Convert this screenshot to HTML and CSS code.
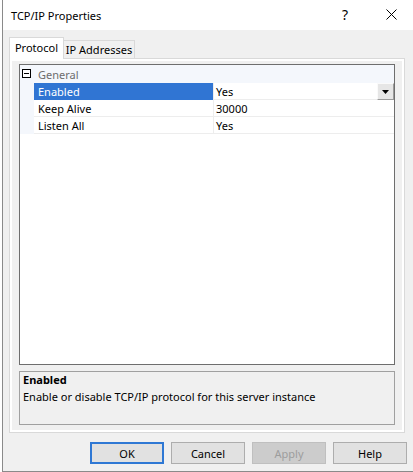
FILE: index.html
```html
<!DOCTYPE html>
<html>
<head>
<meta charset="utf-8">
<link rel="stylesheet" href="styles.css">
</head>
<body>
<div class="window">
  <div class="titlebar">
    <div class="title">TCP/IP Properties</div>
    <div class="cap cap-help">?</div>
    <div class="cap cap-close">
      <svg width="11" height="11" viewBox="0 0 11 11"><path d="M0.5 0.5 L10.5 10.5 M10.5 0.5 L0.5 10.5" stroke="#000" stroke-width="1" fill="none"/></svg>
    </div>
  </div>
  <div class="body">
    <div class="tabs">
      <div class="tabstrip">
        <div class="tab tab-active">Protocol</div>
        <div class="tab">IP Addresses</div>
      </div>
      <div class="panel">
        <div class="grid">
          <div class="cat">
            <span class="minus"><span class="minus-line"></span></span>
            <span class="cat-label">General</span>
          </div>
          <div class="row">
            <div class="gut"></div>
            <div class="name name-sel">Enabled</div>
            <div class="val">
              <span>Yes</span>
              <span class="dd"><svg width="7" height="4" viewBox="0 0 7 4"><polygon points="0,0 7,0 3.5,4" fill="#000"/></svg></span>
            </div>
          </div>
          <div class="row">
            <div class="gut"></div>
            <div class="name">Keep Alive</div>
            <div class="val"><span>30000</span></div>
          </div>
          <div class="row">
            <div class="gut"></div>
            <div class="name">Listen All</div>
            <div class="val"><span>Yes</span></div>
          </div>
        </div>
        <div class="desc">
          <div class="desc-title">Enabled</div>
          <div class="desc-text">Enable or disable TCP/IP protocol for this server instance</div>
        </div>
      </div>
    </div>
    <div class="buttons">
      <div class="btn btn-ok">OK</div>
      <div class="btn">Cancel</div>
      <div class="btn btn-disabled">Apply</div>
      <div class="btn">Help</div>
    </div>
  </div>
</div>
</body>
</html>
```

FILE: styles.css
```css
* { box-sizing: border-box; }
html, body { margin: 0; padding: 0; }
body {
  width: 413px;
  height: 472px;
  overflow: hidden;
  background: #ffffff;
  font-family: "Noto Sans", "DejaVu Sans", sans-serif;
  font-size: 11px;
  color: #000;
}
.window {
  margin-left: 2px;
  width: 412px;
  height: 472px;
  border-left: 1px solid #8a8a8a;
  border-bottom: 1px solid #8a8a8a;
  display: flex;
  flex-direction: column;
  background: #f0f0f0;
}
.titlebar {
  height: 30px;
  background: #fff;
  display: flex;
  align-items: stretch;
  flex: none;
}
.title {
  flex: 1;
  padding-left: 8px;
  display: flex;
  align-items: center;
  font-size: 11px;
}
.cap {
  width: 46px;
  display: flex;
  align-items: center;
  justify-content: center;
}
.cap-help { font-size: 14px; padding-bottom: 1px; }
.cap-close svg { display: block; margin-top: -1px; }
.body {
  flex: 1;
  display: flex;
  flex-direction: column;
}
.tabs {
  margin: 7px 0 0 6px;
  width: 396px;
}
.tabstrip {
  display: flex;
  align-items: flex-end;
  height: 21px;
}
.tab {
  height: 18px;
  width: 71px;
  border: 1px solid #d9d9d9;
  border-bottom: none;
  border-left: none;
  background: #f0f0f0;
  display: flex;
  align-items: center;
  justify-content: center;
}
.tab-active {
  position: relative;
  z-index: 1;
  width: 55px;
  height: 22px;
  margin-bottom: -1px;
  border-left: 1px solid #d9d9d9;
  background: #fff;
  padding-bottom: 2px;
}
.panel {
  height: 375px;
  border: 1px solid #d9d9d9;
  box-shadow: inset 0 0 0 2px #fff;
  background: #f0f0f0;
  padding: 5px 9px 7px 9px;
  display: flex;
  flex-direction: column;
}
.grid {
  height: 301px;
  border: 1px solid #6e6e6e;
  background: #fff;
  flex: none;
}
.cat {
  height: 18px;
  background: #f4f7fc;
  display: flex;
  align-items: center;
  padding-left: 2px;
}
.minus {
  width: 9px;
  height: 9px;
  border: 1px solid #000;
  background: #fff;
  display: flex;
  align-items: center;
  justify-content: center;
  margin-top: -1px;
}
.minus-line {
  width: 5px;
  height: 1px;
  background: #000;
}
.cat-label {
  margin-left: 7px;
  color: #6d6d6d;
}
.row {
  display: grid;
  grid-template-columns: 14px 179px 1fr;
  height: 17px;
}
.gut { background: #f4f7fc; }
.name {
  padding-left: 4px;
  border-bottom: 1px solid #ededed;
  display: flex;
  align-items: center;
}
.name-sel {
  background: #3075d3;
  color: #fff;
  border-bottom-color: #3075d3;
}
.val {
  padding-left: 2px;
  border-left: 1px solid #ededed;
  border-bottom: 1px solid #ededed;
  display: flex;
  align-items: center;
  justify-content: space-between;
}
.dd {
  width: 17px;
  height: 17px;
  margin-bottom: -1px;
  align-self: flex-start;
  background: #e6e6e6;
  border: 1px solid;
  border-color: #fafafa #9a9a9a #9a9a9a #fafafa;
  display: flex;
  align-items: center;
  justify-content: center;
}
.dd svg { display: block; }
.desc {
  margin-top: 6px;
  height: 54px;
  border: 1px solid #a0a0a0;
  background: #f0f0f0;
  padding: 0 3px;
}
.desc-title {
  font-weight: bold;
  line-height: 16px;
}
.desc-text {
  line-height: 17px;
}
.buttons {
  margin-top: 9px;
  padding-left: 87px;
  display: flex;
  gap: 7px;
}
.btn {
  width: 74px;
  height: 22px;
  background: #e1e1e1;
  border: 1px solid #adadad;
  display: flex;
  align-items: center;
  justify-content: center;
}
.btn-ok { border: 2px solid #2f78d4; }
.btn-disabled {
  background: #cccccc;
  border-color: #bfbfbf;
  color: #9d9d9d;
}
```
